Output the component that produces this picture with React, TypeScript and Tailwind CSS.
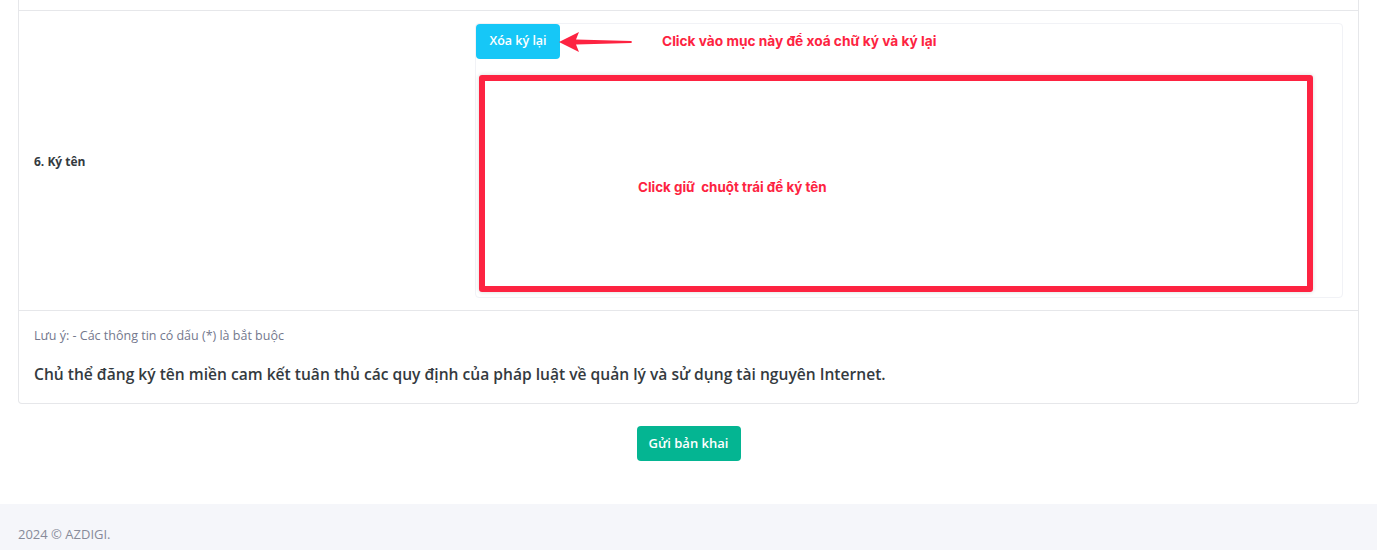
export default function App() {
  return (
    <div className="min-h-[550px] bg-white font-['Open_Sans',sans-serif] text-[#212529]">
      <div className="px-[18px]">
        {/* Form card */}
        <div className="rounded-b border-x border-b border-[#e6e7ea]">
          <div className="h-[10px]"></div>

          {/* Row 6: signature */}
          <div className="flex border-t border-[#e6e7ea]">
            <div className="flex w-[456px] items-center pl-[15px] pt-[2px]">
              <span className="text-[12px] font-bold text-[#343a40]">6. Ký tên</span>
            </div>
            <div className="flex-1 pb-[12px] pr-[15px] pt-[12px]">
              <div className="h-[275px] rounded border border-[#f1f2f6] bg-white">
                <div className="relative">
                  <button className="h-[35px] w-[84px] rounded bg-[#16c7f7] text-[12.5px] font-semibold text-white">
                    Xóa ký lại
                  </button>
                  {/* annotation arrow */}
                  <svg
                    className="absolute left-[83px] top-[7px]"
                    width="76"
                    height="22"
                    viewBox="0 0 76 22"
                  >
                    <path
                      d="M0 11 L20 1 L17 8.5 L72 10 Q74 11 72 12 L17 13.5 L20 21 Z"
                      fill="#fd2341"
                    />
                  </svg>
                  <span className="absolute left-[186px] top-[7px] font-['Inter',sans-serif] text-[13.7px] font-bold text-[#fd2341]">
                    Click vào mục này để xoá chữ ký và ký lại
                  </span>
                </div>

                {/* signature pad */}
                <div className="ml-[3px] mr-[29px] mt-[16px] flex h-[217px] items-center rounded-[3px] border-[6px] border-[#fd2341] shadow-[0_0_4px_rgba(0,0,0,0.15)]">
                  <span className="ml-[153px] mt-[8px] whitespace-pre font-['Inter',sans-serif] text-[13.4px] font-bold text-[#fd2341]">
                    Click giữ  chuột trái để ký tên
                  </span>
                </div>
              </div>
            </div>
          </div>

          {/* Note row */}
          <div className="border-t border-[#e6e7ea] px-[15px] pb-[18px] pt-[15px]">
            <p className="text-[12.5px] leading-[20px] text-[#74788d]">
              Lưu ý: - Các thông tin có dấu (*) là bắt buộc
            </p>
            <p className="mt-[17px] text-[15.6px] font-semibold leading-[22px] text-[#343a40]">
              Chủ thể đăng ký tên miền cam kết tuân thủ các quy định của pháp luật về quản lý và sử dụng tài nguyên Internet.
            </p>
          </div>
        </div>

        <div className="flex justify-center pt-[22px]">
          <button className="h-[35px] w-[104px] rounded bg-[#04b592] text-[13px] font-semibold text-white">
            Gửi bản khai
          </button>
        </div>
      </div>

      {/* Footer */}
      <footer className="mt-[43px] h-[60px] bg-[#f5f6fa] px-[18px] pt-[17px]">
        <span className="text-[13px] text-[#878a99]">2024 © AZDIGI.</span>
      </footer>
    </div>
  );
}
